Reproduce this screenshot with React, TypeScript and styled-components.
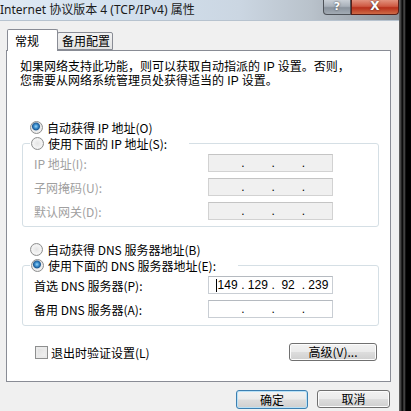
import React from "react";
import styled, { createGlobalStyle } from "styled-components";

const GlobalStyle = createGlobalStyle`
  html, body {
    margin: 0;
    padding: 0;
    background: #000;
  }
  body {
    font-family: "Noto Sans CJK SC", "Noto Sans", sans-serif;
    font-size: 12px;
    color: #000;
  }
`;

const Page = styled.div`
  width: 411px;
  height: 411px;
  display: flex;
  overflow: hidden;
  background: #000;
`;

const Window = styled.div`
  width: 399px;
  height: 411px;
  display: flex;
  flex-direction: column;
  background: #f0f0f0;
`;

const EdgeStrip = styled.div`
  flex: 1;
  background: linear-gradient(
    to right,
    #6b6b6b 0,
    #3a3a3a 2px,
    #0c0c0c 3px,
    #0c0c0c 4px,
    #5a5a5a 5px,
    #2a2a2a 6px,
    #000 7px
  );
`;

const TitleBar = styled.div`
  height: 21px;
  flex: none;
  display: flex;
  align-items: flex-start;
  background: linear-gradient(
    to right,
    #dfe9f4 0,
    #d3e1ef 30%,
    #cbd6e2 60%,
    #b9c2cb 78%,
    #8d9299 100%
  );
  border-bottom: 1px solid #b7c3cf;
  box-sizing: border-box;
`;

const Title = styled.div`
  font-family: "Noto Sans", "Noto Sans CJK SC", sans-serif;
  font-size: 12px;
  line-height: 20px;
  color: #1a1a1a;
  white-space: nowrap;
`;

const CaptionButton = styled.div<{ $close?: boolean }>`
  height: 15px;
  width: ${({ $close }) => ($close ? "48px" : "28px")};
  margin-left: ${({ $close }) => ($close ? "0" : "auto")};
  box-sizing: border-box;
  border: 1px solid ${({ $close }) => ($close ? "#5a1f17" : "#4e5258")};
  border-top: none;
  border-radius: ${({ $close }) => ($close ? "0 0 4px 0" : "0 0 0 4px")};
  background: ${({ $close }) =>
    $close
      ? "linear-gradient(to bottom, #e2927e 0, #cf5a43 45%, #b8301b 55%, #cf6a46 100%)"
      : "linear-gradient(to bottom, #c9cfd6 0, #a9b1ba 45%, #8a939d 55%, #a3abb4 100%)"};
  color: #fff;
  font-family: "DejaVu Sans", sans-serif;
  font-weight: bold;
  font-size: ${({ $close }) => ($close ? "12px" : "11px")};
  line-height: 13px;
  text-align: center;
  text-shadow: 0 0 2px #333;
`;

const Body = styled.div`
  flex: 1;
  padding: 8px 8px 0 6px;
  display: flex;
  flex-direction: column;
`;

const TabRow = styled.div`
  display: flex;
  align-items: flex-end;
  padding-left: 1px;
  height: 21px;
  position: relative;
  z-index: 1;
`;

const Tab = styled.div<{ $active?: boolean }>`
  box-sizing: border-box;
  height: ${({ $active }) => ($active ? "22px" : "18px")};
  margin-bottom: ${({ $active }) => ($active ? "-1px" : "0")};
  width: ${({ $active }) => ($active ? "51px" : "56px")};
  border: 1px solid #898c95;
  border-bottom: ${({ $active }) => ($active ? "none" : "1px solid #898c95")};
  border-radius: 2px 2px 0 0;
  background: ${({ $active }) =>
    $active ? "#fff" : "linear-gradient(to bottom, #f2f2f2, #e3e3e3)"};
  font-size: 12px;
  line-height: ${({ $active }) => ($active ? "21px" : "16px")};
  padding-left: ${({ $active }) => ($active ? "7px" : "4px")};
  margin-left: ${({ $active }) => ($active ? "0" : "-1px")};
`;

const Panel = styled.div`
  box-sizing: border-box;
  height: 332px;
  border: 1px solid #898c95;
  background: #fff;
  padding: 0 11px 0 13px;
  display: flex;
  flex-direction: column;
`;

const Description = styled.div`
  margin-top: 9px;
  display: flex;
  flex-direction: column;
`;

const DescriptionLine = styled.span`
  display: block;
  height: 14px;
  font-family: "Liberation Sans", "Noto Sans CJK SC", sans-serif;
  font-size: 12px;
  line-height: 14px;
  white-space: nowrap;
`;

const OptionRow = styled.label<{ $gap?: number }>`
  display: flex;
  align-items: center;
  height: 16px;
  margin-top: ${({ $gap }) => $gap ?? 0}px;
  margin-left: 10px;
  font-size: 12px;
  white-space: nowrap;
`;

const RadioMark = styled.span<{ $checked?: boolean }>`
  width: 13px;
  height: 13px;
  box-sizing: border-box;
  border-radius: 50%;
  border: 1px solid #8e8f8f;
  margin-right: 4px;
  flex: none;
  background: ${({ $checked }) =>
    $checked
      ? "radial-gradient(circle at 45% 40%, #9ad6f8 0, #3c8fcf 2px, #1d5a94 3.5px, #e9e9e9 4.5px, #f4f4f4 6px)"
      : "radial-gradient(circle at 50% 50%, #e4e4e4 0, #efefef 3px, #fafafa 6px)"};
  box-shadow: inset 0 0 1px #c8c8c8;
`;

const CheckMark = styled.span`
  width: 13px;
  height: 13px;
  box-sizing: border-box;
  border: 1px solid #8e8f8f;
  background: linear-gradient(135deg, #dcdcdc, #f6f6f6);
  box-shadow: inset 0 0 0 2px #eaeaea;
  margin-right: 3px;
  flex: none;
`;

const Group = styled.fieldset<{ $padBottom: number }>`
  margin: 0 0 0 2px;
  padding: 0 0 ${({ $padBottom }) => $padBottom}px 11px;
  border: 1px solid #d5dfe5;
  border-radius: 3px;
  min-width: 0;
`;

const GroupLegend = styled.legend`
  padding: 0 22px 0 1px;
  margin-left: -4px;
`;

const LegendRow = styled.span`
  display: flex;
  align-items: center;
  height: 16px;
  font-size: 12px;
  white-space: nowrap;
`;

const FieldRow = styled.div`
  display: flex;
  align-items: center;
  height: 18px;
  margin-top: 6px;
  &:first-of-type {
    margin-top: 3px;
  }
`;

const FieldLabel = styled.span<{ $disabled?: boolean }>`
  width: 174px;
  flex: none;
  font-size: 12px;
  color: ${({ $disabled }) => ($disabled ? "#a0a0a0" : "#000")};
  white-space: nowrap;
`;

const IpBox = styled.div<{ $disabled?: boolean }>`
  box-sizing: border-box;
  width: 125px;
  height: 18px;
  display: flex;
  align-items: center;
  padding-left: 5px;
  border: 1px solid ${({ $disabled }) => ($disabled ? "#d2d2d2" : "#c9ced4")};
  border-top-color: ${({ $disabled }) => ($disabled ? "#c4c4c4" : "#b5bac0")};
  background: ${({ $disabled }) => ($disabled ? "#f0f0f0" : "#fff")};
  font-family: "Liberation Sans", "DejaVu Sans", sans-serif;
  font-size: 12px;
  color: #000;
`;

const IpSegment = styled.span`
  width: 28px;
  text-align: center;
  position: relative;
`;

const IpDot = styled.span`
  width: 3px;
  text-align: center;
`;

const Caret = styled.span`
  position: absolute;
  left: 2px;
  top: 1px;
  width: 1px;
  height: 13px;
  background: #000;
`;

const BottomRow = styled.div`
  display: flex;
  align-items: center;
  justify-content: space-between;
  margin: 17px 2px 0 15px;
  height: 18px;
`;

const CheckLabel = styled.label`
  display: flex;
  align-items: center;
  font-size: 12px;
  white-space: nowrap;
`;

const Button = styled.button<{ $default?: boolean; $width: number }>`
  box-sizing: border-box;
  width: ${({ $width }) => $width}px;
  height: ${({ $default }) => ($default ? "19px" : "18px")};
  padding: 0;
  border: 1px solid ${({ $default }) => ($default ? "#3c7fb1" : "#707070")};
  border-radius: 3px;
  background: linear-gradient(
    to bottom,
    #f2f2f2 0,
    #ebebeb 48%,
    #dddddd 52%,
    #cfcfcf 100%
  );
  box-shadow: ${({ $default }) =>
    $default ? "inset 0 0 0 1px #b8e1f7" : "inset 0 0 0 1px #fcfcfc"};
  font-family: "Noto Sans CJK SC", sans-serif;
  font-size: 12px;
  line-height: 16px;
  color: #000;
`;

const Footer = styled.div`
  display: flex;
  justify-content: flex-end;
  gap: 9px;
  margin-top: 8px;
  padding-right: 1px;
`;

const IpField: React.FC<{ values?: string[]; disabled?: boolean; caret?: boolean }> = ({
  values = ["", "", "", ""],
  disabled,
  caret,
}) => (
  <IpBox $disabled={disabled}>
    {values.map((v, i) => (
      <React.Fragment key={i}>
        {i > 0 && <IpDot>.</IpDot>}
        <IpSegment>
          {i === 0 && caret && <Caret />}
          {v}
        </IpSegment>
      </React.Fragment>
    ))}
  </IpBox>
);

const App: React.FC = () => {
  return (
    <Page>
      <GlobalStyle />
      <Window>
        <TitleBar>
          <Title>Internet 协议版本 4 (TCP/IPv4) 属性</Title>
          <CaptionButton>?</CaptionButton>
          <CaptionButton $close>X</CaptionButton>
        </TitleBar>
        <Body>
          <TabRow>
            <Tab $active>常规</Tab>
            <Tab>备用配置</Tab>
          </TabRow>
          <Panel>
            <Description>
              <DescriptionLine>
                如果网络支持此功能，则可以获取自动指派的 IP 设置。否则，
              </DescriptionLine>
              <DescriptionLine>
                您需要从网络系统管理员处获得适当的 IP 设置。
              </DescriptionLine>
            </Description>

            <OptionRow $gap={31}>
              <RadioMark $checked />
              自动获得 IP 地址(O)
            </OptionRow>
            <Group $padBottom={6}>
              <GroupLegend>
                <LegendRow>
                  <RadioMark />
                  使用下面的 IP 地址(S):
                </LegendRow>
              </GroupLegend>
              <FieldRow>
                <FieldLabel $disabled>IP 地址(I):</FieldLabel>
                <IpField disabled />
              </FieldRow>
              <FieldRow>
                <FieldLabel $disabled>子网掩码(U):</FieldLabel>
                <IpField disabled />
              </FieldRow>
              <FieldRow>
                <FieldLabel $disabled>默认网关(D):</FieldLabel>
                <IpField disabled />
              </FieldRow>
            </Group>

            <OptionRow $gap={14}>
              <RadioMark />
              自动获得 DNS 服务器地址(B)
            </OptionRow>
            <Group $padBottom={7}>
              <GroupLegend>
                <LegendRow>
                  <RadioMark $checked />
                  使用下面的 DNS 服务器地址(E):
                </LegendRow>
              </GroupLegend>
              <FieldRow>
                <FieldLabel>首选 DNS 服务器(P):</FieldLabel>
                <IpField values={["149", "129", "92", "239"]} caret />
              </FieldRow>
              <FieldRow>
                <FieldLabel>备用 DNS 服务器(A):</FieldLabel>
                <IpField />
              </FieldRow>
            </Group>

            <BottomRow>
              <CheckLabel>
                <CheckMark />
                退出时验证设置(L)
              </CheckLabel>
              <Button $width={88}>高级(V)...</Button>
            </BottomRow>
          </Panel>
          <Footer>
            <Button $default $width={72}>
              确定
            </Button>
            <Button $width={73}>取消</Button>
          </Footer>
        </Body>
      </Window>
      <EdgeStrip />
    </Page>
  );
};

export default App;
